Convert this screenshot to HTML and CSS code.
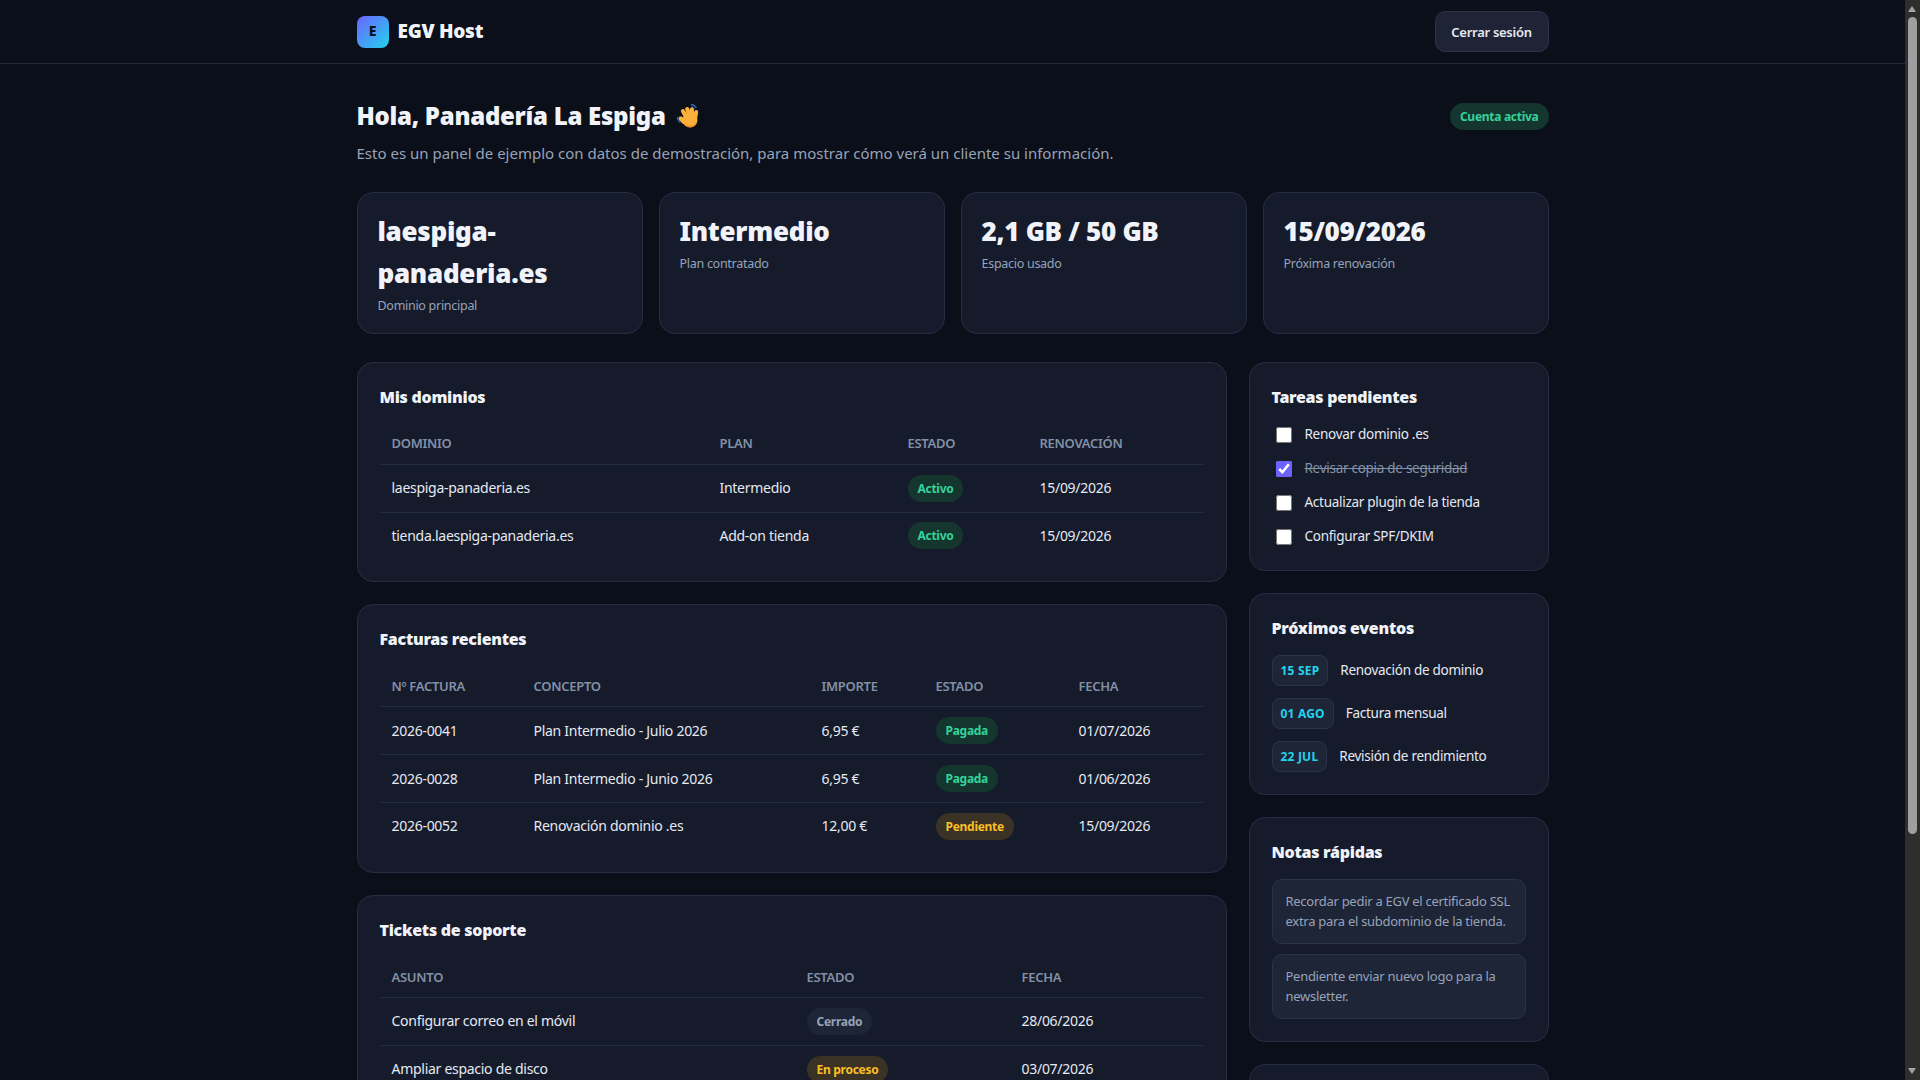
FILE: index.html
```html
<!DOCTYPE html>
<html lang="es">
<head>
    <meta charset="UTF-8">
    <meta name="viewport" content="width=device-width, initial-scale=1.0">
    <title>EGV Host - Panel de cliente</title>
    <link rel="stylesheet" href="styles.css">
</head>
<body>
    <header class="topbar">
        <div class="topbar-inner">
            <div class="brand">
                <span class="brand-logo">E</span>
                <span class="brand-name">EGV Host</span>
            </div>
            <button class="logout">Cerrar sesión</button>
        </div>
    </header>

    <main class="page">
        <section class="welcome">
            <div class="welcome-top">
                <h1>Hola, Panadería La Espiga
                    <svg class="wave" viewBox="0 0 26 26" aria-hidden="true">
                        <g fill="none" stroke="#2f6fb5" stroke-width="1.4" stroke-linecap="round">
                            <path d="M1.500 14.500c.2 2 1 3.500 2.500 4.800"/>
                            <path d="M3.800 14c.1 1.200.5 2.100 1.200 2.900"/>
                            <path d="M15.500 1.500c2 .3 3.500 1.300 4.500 3"/>
                            <path d="M15.500 4c1 .2 1.800.7 2.400 1.600"/>
                        </g>
                        <g fill="#fbb03b">
                            <rect x="6.900" y="5.500" width="4.200" height="13" rx="2.100" transform="rotate(-28 9 12)"/>
                            <rect x="10.300" y="3.800" width="4.200" height="13" rx="2.100" transform="rotate(-16 12.400 10)"/>
                            <rect x="14" y="4.500" width="4.200" height="13" rx="2.100" transform="rotate(-4 16 11)"/>
                            <rect x="17.600" y="7" width="4" height="11" rx="2" transform="rotate(10 19.600 12.500)"/>
                            <rect x="4" y="13" width="4.200" height="9" rx="2.100" transform="rotate(-42 6 17)"/>
                            <circle cx="14" cy="17" r="7.500"/>
                        </g>
                        <path d="M7.500 20.500c2 3 5 4.300 8.200 3.500 3-.8 4.800-3 5.400-6-1.500 3-4 4.700-7 4.700-2.500 0-4.700-.7-6.600-2.200z" fill="#f08c1d"/>
                    </svg>
                </h1>
                <span class="pill pill-green">Cuenta activa</span>
            </div>
            <p class="intro">Esto es un panel de ejemplo con datos de demostración, para mostrar cómo verá un cliente su información.</p>
        </section>

        <section class="stats">
            <div class="stat">
                <div class="stat-value">laespiga-panaderia.es</div>
                <div class="stat-label">Dominio principal</div>
            </div>
            <div class="stat">
                <div class="stat-value">Intermedio</div>
                <div class="stat-label">Plan contratado</div>
            </div>
            <div class="stat">
                <div class="stat-value">2,1 GB / 50 GB</div>
                <div class="stat-label">Espacio usado</div>
            </div>
            <div class="stat">
                <div class="stat-value">15/09/2026</div>
                <div class="stat-label">Próxima renovación</div>
            </div>
        </section>

        <div class="columns">
            <div class="col">
                <section class="panel">
                    <h2>Mis dominios</h2>
                    <table class="t-domains">
                        <thead>
                            <tr><th>Dominio</th><th>Plan</th><th>Estado</th><th>Renovación</th></tr>
                        </thead>
                        <tbody>
                            <tr><td>laespiga-panaderia.es</td><td>Intermedio</td><td><span class="pill pill-green">Activo</span></td><td>15/09/2026</td></tr>
                            <tr><td>tienda.laespiga-panaderia.es</td><td>Add-on tienda</td><td><span class="pill pill-green">Activo</span></td><td>15/09/2026</td></tr>
                        </tbody>
                    </table>
                </section>

                <section class="panel">
                    <h2>Facturas recientes</h2>
                    <table class="t-invoices">
                        <thead>
                            <tr><th>Nº factura</th><th>Concepto</th><th>Importe</th><th>Estado</th><th>Fecha</th></tr>
                        </thead>
                        <tbody>
                            <tr><td>2026-0041</td><td>Plan Intermedio - Julio 2026</td><td>6,95 €</td><td><span class="pill pill-green">Pagada</span></td><td>01/07/2026</td></tr>
                            <tr><td>2026-0028</td><td>Plan Intermedio - Junio 2026</td><td>6,95 €</td><td><span class="pill pill-green">Pagada</span></td><td>01/06/2026</td></tr>
                            <tr><td>2026-0052</td><td>Renovación dominio .es</td><td>12,00 €</td><td><span class="pill pill-amber">Pendiente</span></td><td>15/09/2026</td></tr>
                        </tbody>
                    </table>
                </section>

                <section class="panel">
                    <h2>Tickets de soporte</h2>
                    <table class="t-tickets">
                        <thead>
                            <tr><th>Asunto</th><th>Estado</th><th>Fecha</th></tr>
                        </thead>
                        <tbody>
                            <tr><td>Configurar correo en el móvil</td><td><span class="pill pill-grey">Cerrado</span></td><td>28/06/2026</td></tr>
                            <tr><td>Ampliar espacio de disco</td><td><span class="pill pill-amber">En proceso</span></td><td>03/07/2026</td></tr>
                        </tbody>
                    </table>
                </section>

                <section class="panel">
                    <h2>Actividad reciente</h2>
                    <table class="t-tickets">
                        <tbody>
                            <tr><td>Copia de seguridad completada</td><td><span class="pill pill-green">Correcto</span></td><td>01/07/2026</td></tr>
                        </tbody>
                    </table>
                </section>
            </div>

            <aside class="col">
                <section class="panel">
                    <h2>Tareas pendientes</h2>
                    <ul class="tasks">
                        <li><input type="checkbox"><span>Renovar dominio .es</span></li>
                        <li class="done"><input type="checkbox" checked><span>Revisar copia de seguridad</span></li>
                        <li><input type="checkbox"><span>Actualizar plugin de la tienda</span></li>
                        <li><input type="checkbox"><span>Configurar SPF/DKIM</span></li>
                    </ul>
                </section>

                <section class="panel">
                    <h2>Próximos eventos</h2>
                    <ul class="events">
                        <li><span class="chip">15 SEP</span><span>Renovación de dominio</span></li>
                        <li><span class="chip">01 AGO</span><span>Factura mensual</span></li>
                        <li><span class="chip">22 JUL</span><span>Revisión de rendimiento</span></li>
                    </ul>
                </section>

                <section class="panel">
                    <h2>Notas rápidas</h2>
                    <div class="note">Recordar pedir a EGV el certificado SSL extra para el subdominio de la tienda.</div>
                    <div class="note">Pendiente enviar nuevo logo para la newsletter.</div>
                </section>

                <section class="panel">
                    <h2>Soporte</h2>
                    <div class="note">Horario de atención de lunes a viernes, de 9:00 a 18:00.</div>
                </section>
            </aside>
        </div>
    </main>

    <!-- la barra de la ventana, el navegador sin cabeza no la pinta -->
    <div class="scrollbar">
        <span class="scroll-up"></span>
        <span class="scroll-thumb"></span>
        <span class="scroll-down"></span>
    </div>
</body>
</html>
```

FILE: styles.css
```css
* {
    box-sizing: border-box;
}

html {
    background-color: #0b0f1a;
}

::-webkit-scrollbar {
    display: none;
}

body {
    margin: 0;
    padding-right: 15px;
    background-color: #0b0f1a;
    color: #e6e9f2;
    font-family: "Noto Sans", sans-serif;
    font-size: 14px;
    line-height: 1.6;
    letter-spacing: -0.02em;
}

h1, h2, p, ul {
    margin: 0;
    padding: 0;
}

ul {
    list-style: none;
}

.scrollbar {
    position: fixed;
    top: 0;
    right: 0;
    width: 15px;
    height: 100vh;
    background-color: #2e2e2e;
}

.scroll-up,
.scroll-down {
    position: absolute;
    left: 3px;
    width: 0;
    height: 0;
    border-left: 4.500px solid transparent;
    border-right: 4.500px solid transparent;
}

.scroll-up {
    top: 6px;
    border-bottom: 6px solid #a3a3a3;
}

.scroll-down {
    bottom: 6px;
    border-top: 6px solid #a3a3a3;
}

.scroll-thumb {
    position: absolute;
    top: 17px;
    left: 3px;
    width: 9px;
    height: 817px;
    background-color: #9f9f9f;
    border-radius: 5px;
}

.topbar {
    border-bottom: 1px solid #262c40;
}

.topbar-inner {
    max-width: 1240px;
    height: 63px;
    margin: 0 auto;
    padding: 0 24px;
    display: flex;
    align-items: center;
    justify-content: space-between;
}

.brand {
    display: flex;
    align-items: center;
    gap: 9px;
}

.brand-logo {
    width: 32px;
    height: 32px;
    border-radius: 8px;
    background: linear-gradient(135deg, #6c63ff, #22d3ee);
    color: #0b0f1a;
    font-size: 14px;
    font-weight: 800;
    display: flex;
    align-items: center;
    justify-content: center;
}

.brand-name {
    color: #f1f3f9;
    font-size: 19px;
    font-weight: 900;
}

.logout {
    width: 114px;
    height: 41px;
    background-color: #1e2436;
    border: 1px solid #2c3349;
    border-radius: 10px;
    color: #e6e9f2;
    font-family: inherit;
    font-size: 13px;
    font-weight: 600;
    letter-spacing: inherit;
}

.page {
    max-width: 1240px;
    margin: 0 auto;
    padding: 33px 24px;
}

.welcome-top {
    display: flex;
    align-items: center;
    justify-content: space-between;
}

h1 {
    color: #f1f3f9;
    font-size: 24px;
    font-weight: 900;
    display: flex;
    align-items: center;
    gap: 10px;
}

.wave {
    width: 26px;
    height: 26px;
}

.intro {
    margin-top: 6px;
    color: #97a3b8;
    font-size: 15px;
    letter-spacing: 0;
}

.pill {
    display: inline-block;
    padding: 3px 10px;
    border-radius: 999px;
    font-size: 12px;
    font-weight: 700;
    line-height: 21px;
    vertical-align: middle;
}

.pill-green {
    background-color: #15352f;
    color: #34d399;
}

.pill-amber {
    background-color: #3a3225;
    color: #fbbf24;
}

.pill-grey {
    background-color: #1e2537;
    color: #94a3b8;
}

.stats {
    margin-top: 27px;
    display: grid;
    grid-template-columns: repeat(4, 1fr);
    gap: 16px;
}

.stat {
    background-color: #151b2b;
    border: 1px solid #262d42;
    border-radius: 16px;
    padding: 18px 20px 17px;
}

.stat-value {
    color: #f1f3f9;
    font-size: 26px;
    font-weight: 900;
}

.stat-label {
    margin-top: 1px;
    color: #97a3b8;
    font-size: 12.500px;
}

.columns {
    margin-top: 28px;
    display: grid;
    grid-template-columns: 870px 300px;
    gap: 22px;
}

.col {
    display: flex;
    flex-direction: column;
    gap: 22px;
}

.panel {
    background-color: #151b2b;
    border: 1px solid #262d42;
    border-radius: 16px;
    padding: 22px;
}

h2 {
    color: #f1f3f9;
    font-size: 16px;
    font-weight: 900;
    line-height: 25px;
    margin-bottom: 14.300px;
}

table {
    width: 100%;
    border-collapse: collapse;
    table-layout: fixed;
}

th {
    padding: 9.500px 12px;
    color: #8390a6;
    font-size: 13px;
    font-weight: 600;
    text-align: left;
    text-transform: uppercase;
    border-bottom: 1px solid #262d42;
}

td {
    height: 48px;
    padding: 0 12px;
    color: #e6e9f2;
    font-size: 14px;
    border-bottom: 1px solid #262d42;
}

tr:last-child td {
    height: 47px;
    border-bottom: 0;
}

.t-domains th:nth-child(1) { width: 328px; }
.t-domains th:nth-child(2) { width: 188px; }
.t-domains th:nth-child(3) { width: 132px; }

.t-invoices th:nth-child(1) { width: 142px; }
.t-invoices th:nth-child(2) { width: 288px; }
.t-invoices th:nth-child(3) { width: 114px; }
.t-invoices th:nth-child(4) { width: 143px; }

.t-tickets th:nth-child(1) { width: 415px; }
.t-tickets th:nth-child(2) { width: 215px; }

.tasks {
    margin-top: 1.400px;
    display: flex;
    flex-direction: column;
    gap: 12px;
    font-size: 13.500px;
}

.tasks li {
    height: 22px;
    display: flex;
    align-items: center;
    gap: 13px;
}

.tasks input {
    width: 16px;
    height: 16px;
    margin: 0 0 0 4px;
    accent-color: #6c63ff;
}

.tasks .done span {
    color: #8390a6;
    text-decoration: line-through;
}

.events {
    margin-top: 1.400px;
    display: flex;
    flex-direction: column;
    gap: 12px;
    font-size: 13.500px;
}

.events li {
    display: flex;
    align-items: center;
    gap: 12px;
}

.chip {
    height: 31px;
    padding: 0 8px;
    display: flex;
    align-items: center;
    background-color: #1e2537;
    border: 1px solid #2c3349;
    border-radius: 8px;
    color: #22d3ee;
    font-size: 12px;
    font-weight: 700;
    letter-spacing: 0.2px;
}

.note {
    padding: 12px 13px;
    background-color: #1e2537;
    border: 1px solid #2c3349;
    border-radius: 10px;
    color: #97a3b8;
    font-size: 13px;
    line-height: 1.5;
}

.note + .note {
    margin-top: 10px;
}
```
